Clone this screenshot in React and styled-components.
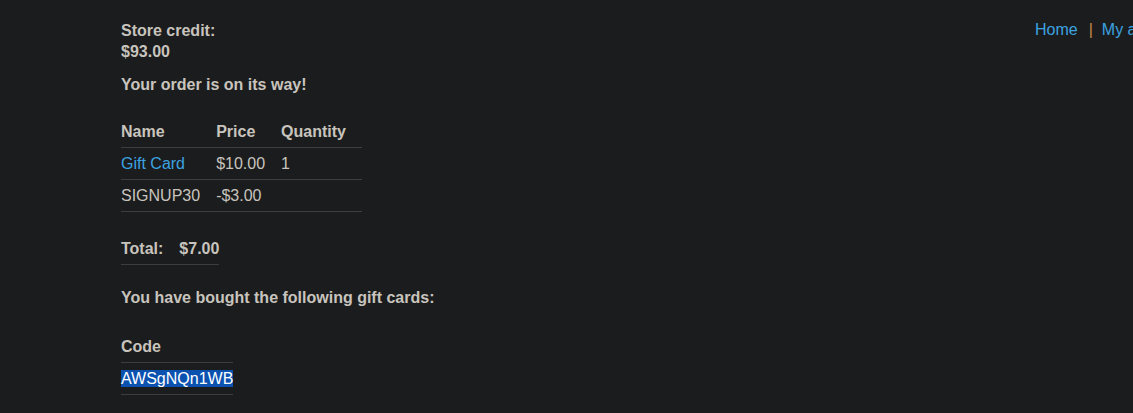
import styled, { createGlobalStyle } from 'styled-components';

const GlobalStyle = createGlobalStyle`
  html, body {
    margin: 0;
    padding: 0;
    overflow: hidden;
    background: #1b1c1e;
  }
  body {
    font-family: 'Liberation Sans', Arial, sans-serif;
    font-size: 16px;
    color: #c8c4bd;
  }
`;

const Page = styled.div`
  display: grid;
  grid-template-columns: 914px max-content;
  padding: 20px 0 0 121px;
  width: max-content;
`;

const Main = styled.main`
  display: flex;
  flex-direction: column;
  align-items: flex-start;
`;

const Nav = styled.nav`
  display: flex;
  white-space: nowrap;
  line-height: 19px;
`;

const NavLink = styled.a`
  color: #3ba3e0;
  text-decoration: none;
`;

const Sep = styled.span`
  color: #c98848;
  padding: 0 9px 0 11px;
`;

const Strong = styled.div`
  font-weight: bold;
  line-height: 21px;
  margin-top: ${(p) => p.$mt || 0}px;
`;

const Table = styled.table`
  border-collapse: collapse;
  margin-top: ${(p) => p.$mt || 0}px;

  & th,
  & td {
    text-align: left;
    line-height: 19px;
    padding: 6px ${(p) => (p.$pad == null ? 16 : p.$pad)}px 6px 0;
    border-bottom: 1px solid #3a3d41;
  }

  & th {
    font-weight: bold;
  }

  & td {
    font-weight: normal;
  }
`;

const Link = styled.a`
  color: #3ba3e0;
  text-decoration: none;
`;

const Code = styled.span`
  background: #0b52b0;
  color: #ffffff;
`;

const App = () => {
  return (
    <>
      <GlobalStyle />
      <Page>
        <Main>
          <Strong>Store credit:</Strong>
          <Strong>$93.00</Strong>
          <Strong $mt={12}>Your order is on its way!</Strong>

          <Table $mt={21}>
            <thead>
              <tr>
                <th>Name</th>
                <th>Price</th>
                <th>Quantity</th>
              </tr>
            </thead>
            <tbody>
              <tr>
                <td><Link href="#">Gift Card</Link></td>
                <td>$10.00</td>
                <td>1</td>
              </tr>
              <tr>
                <td>SIGNUP30</td>
                <td>-$3.00</td>
                <td></td>
              </tr>
            </tbody>
          </Table>

          <Table $mt={21} $pad={0}>
            <tbody>
              <tr>
                <th style={{ paddingRight: 16 }}>Total:</th>
                <th>$7.00</th>
              </tr>
            </tbody>
          </Table>

          <Strong $mt={22}>You have bought the following gift cards:</Strong>

          <Table $mt={23} $pad={0}>
            <thead>
              <tr>
                <th>Code</th>
              </tr>
            </thead>
            <tbody>
              <tr>
                <td><Code>AWSgNQn1WB</Code></td>
              </tr>
            </tbody>
          </Table>
        </Main>

        <Nav>
          <NavLink href="#">Home</NavLink>
          <Sep>|</Sep>
          <NavLink href="#">My account</NavLink>
          <Sep>|</Sep>
          <NavLink href="#">Logout</NavLink>
        </Nav>
      </Page>
    </>
  );
};

export default App;
